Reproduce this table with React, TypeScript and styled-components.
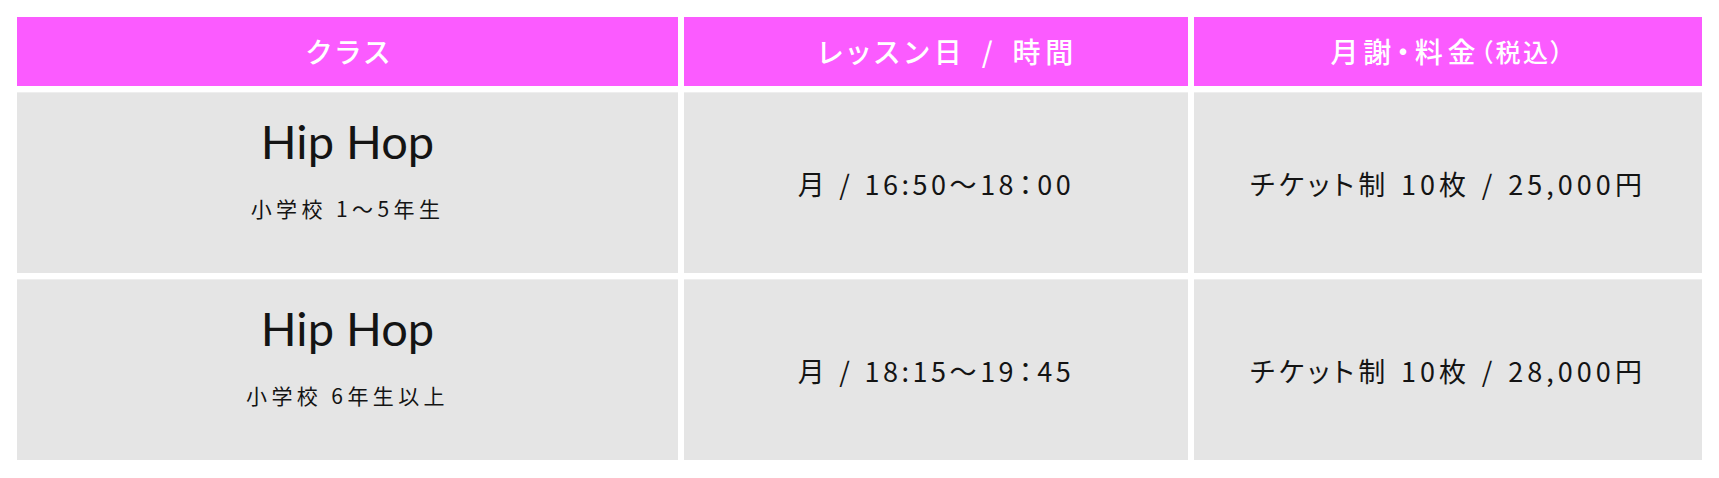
import styled, { createGlobalStyle } from "styled-components";

const GlobalStyle = createGlobalStyle`
  html, body {
    margin: 0;
    padding: 0;
    background: #ffffff;
  }
  body {
    font-family: "Noto Sans CJK JP", "Noto Sans", sans-serif;
    color: #1e1e1e;
    font-feature-settings: "palt";
  }
`;

const Wrapper = styled.div`
  padding: 17px 17px;
`;

const Table = styled.div`
  display: grid;
  grid-template-columns: 661px 504px 1fr;
  grid-template-rows: 69px 181px 181px;
  gap: 6px;
`;

const HeadCell = styled.div<{ $shift?: number }>`
  background: #fb5bff;
  color: #ffffff;
  display: flex;
  align-items: center;
  justify-content: center;
  font-size: 28px;
  font-weight: 500;
  letter-spacing: 0.17em;
  padding: 0 0 2px ${(p) => p.$shift ?? 0}px;
  word-spacing: 0.15em;
`;

const Small = styled.span`
  font-size: 25px;
  letter-spacing: 0.1em;
`;

const Cell = styled.div`
  background: #e5e5e5;
  border-top: 1px solid #eeeeee;
  display: flex;
  flex-direction: column;
  align-items: center;
  justify-content: center;
  font-size: 27px;
  font-weight: 400;
  letter-spacing: 0.15em;
  word-spacing: 0.06em;
  color: #141414;
`;

const ClassCell = styled(Cell)`
  padding-bottom: 30px;
`;

const ClassName = styled.div`
  font-family: Lato, "Liberation Sans", sans-serif;
  font-size: 47px;
  font-weight: 400;
  letter-spacing: 0;
  word-spacing: 0;
  line-height: 1;
  color: #141414;
`;

const Grade = styled.div`
  margin-top: 33px;
  font-size: 21px;
  letter-spacing: 0.21em;
  word-spacing: 0;
  line-height: 1;
`;

const TimeText = styled.span`
  letter-spacing: 0.13em;
`;

const Colon = styled.span`
  margin: 0 0.06em;
`;

type Lesson = {
  name: string;
  grade: string;
  day: string;
  start: string;
  endHour: string;
  endMin: string;
  price: string;
};

const lessons: Lesson[] = [
  {
    name: "Hip Hop",
    grade: "小学校 1～5年生",
    day: "月",
    start: "16:50",
    endHour: "18",
    endMin: "00",
    price: "チケット制 10枚 / 25,000円",
  },
  {
    name: "Hip Hop",
    grade: "小学校 6年生以上",
    day: "月",
    start: "18:15",
    endHour: "19",
    endMin: "45",
    price: "チケット制 10枚 / 28,000円",
  },
];

export default function App() {
  return (
    <>
      <GlobalStyle />
      <Wrapper>
        <Table>
          <HeadCell $shift={5}>クラス</HeadCell>
          <HeadCell $shift={24}>レッスン日 / 時間</HeadCell>
          <HeadCell>
            月謝・料金<Small>（税込）</Small>
          </HeadCell>
          {lessons.map((l, i) => (
            <>
              <ClassCell key={"c" + i}>
                <ClassName>{l.name}</ClassName>
                <Grade>{l.grade}</Grade>
              </ClassCell>
              <Cell key={"t" + i}>
                <TimeText>
                  {l.day} / {l.start}～{l.endHour}
                  <Colon>：</Colon>
                  {l.endMin}
                </TimeText>
              </Cell>
              <Cell key={"p" + i}>{l.price}</Cell>
            </>
          ))}
        </Table>
      </Wrapper>
    </>
  );
}
